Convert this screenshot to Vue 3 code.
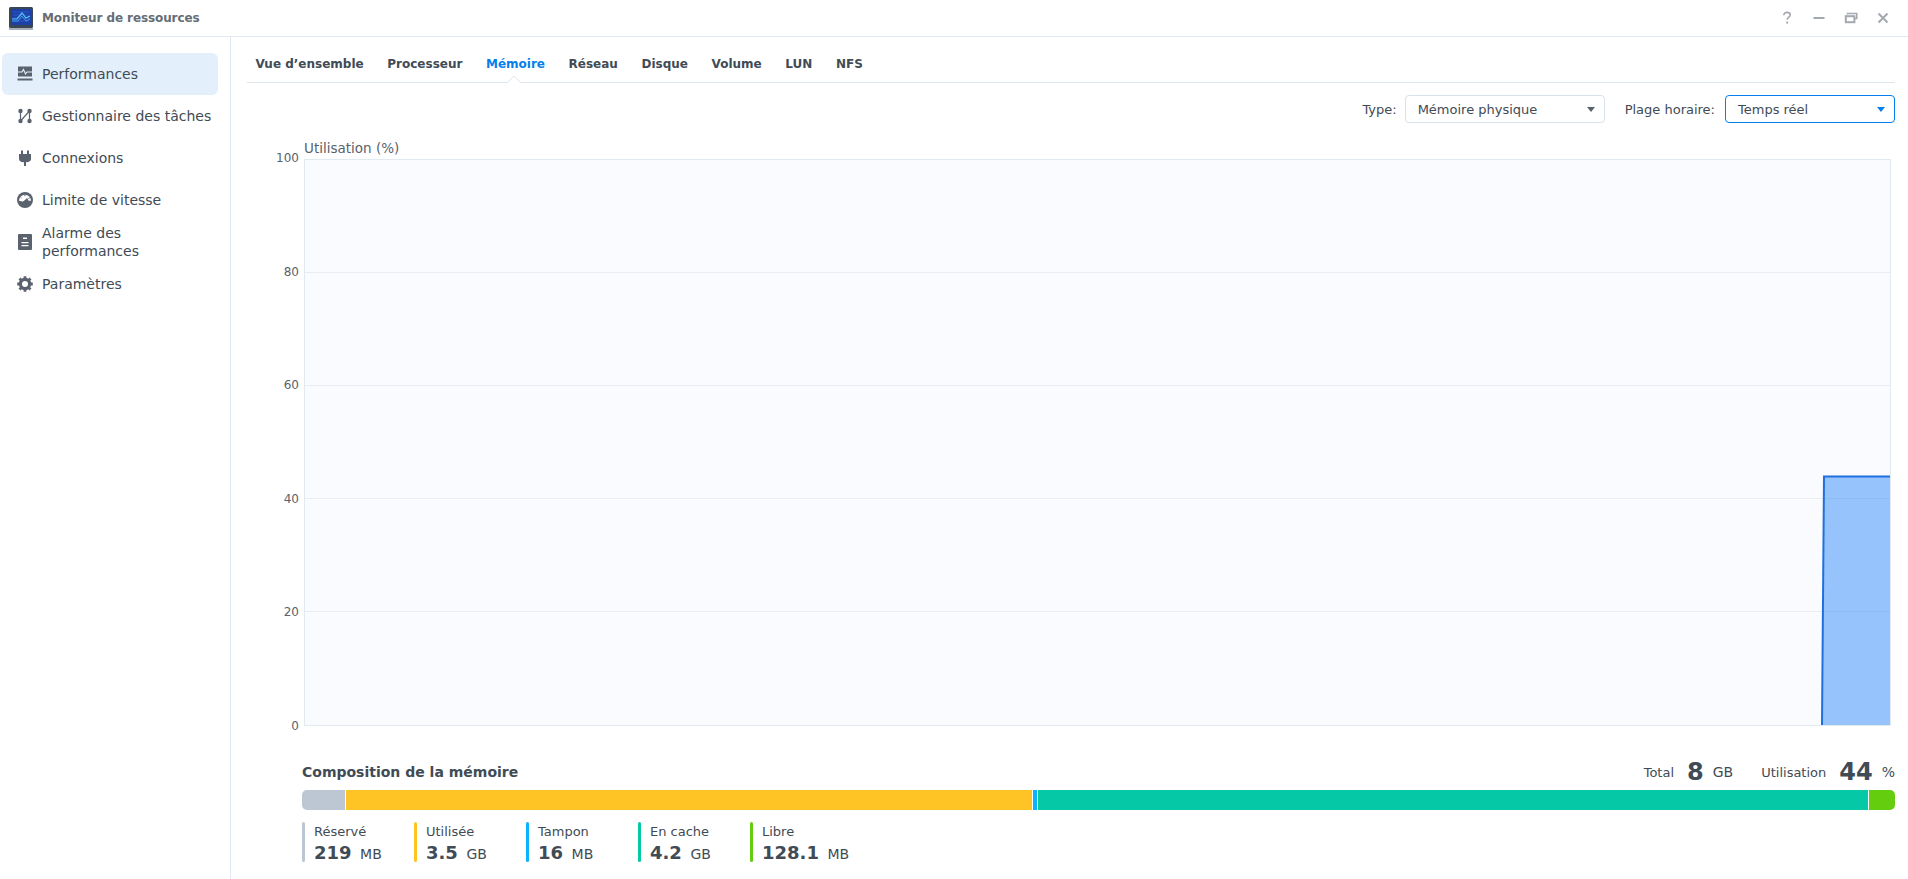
<script setup>
const tabs = ['Vue d’ensemble', 'Processeur', 'Mémoire', 'Réseau', 'Disque', 'Volume', 'LUN', 'NFS']
const ticks = [
  { v: 100, y: 0 }, { v: 80, y: 113.5 }, { v: 60, y: 226.5 },
  { v: 40, y: 339.5 }, { v: 20, y: 452.5 }, { v: 0, y: 566 }
]
const legend = [
  { label: 'Réservé', value: '219', unit: 'MB', color: '#bdc7d3' },
  { label: 'Utilisée', value: '3.5', unit: 'GB', color: '#fec425' },
  { label: 'Tampon', value: '16', unit: 'MB', color: '#0db2fc' },
  { label: 'En cache', value: '4.2', unit: 'GB', color: '#05c9a6' },
  { label: 'Libre', value: '128.1', unit: 'MB', color: '#64cd0e' }
]
</script>

<template>
  <div class="window">
    <header class="titlebar">
      <svg class="logo" width="26" height="24" viewBox="0 0 26 24">
        <rect x="1" y="1" width="24" height="21" rx="1.5" fill="#3a4556" />
        <rect x="3" y="3" width="20" height="16" fill="#1c3fa8" />
        <rect x="1" y="22" width="24" height="2" fill="#a9afb8" />
        <path d="M5 6H21M5 9H21M5 12H21M5 15H21" stroke="#2f58c4" stroke-width="1" />
        <path d="M4 13L9 13L14 7L18 12L22 10" fill="none" stroke="#59c6f2" stroke-width="1.2" />
        <path d="M4 15L10 15L14 10L18 15L22 13" fill="none" stroke="#3c9be6" stroke-width="1" />
      </svg>
      <span class="app-title">Moniteur de ressources</span>
      <div class="win-controls">
        <svg width="14" height="14" viewBox="0 0 14 14"><path d="M3.8 4.2C3.8 2.4 5.2 1.4 7 1.4C8.8 1.4 10.2 2.4 10.2 4C10.2 6.2 7.2 6.2 7.2 8.8" fill="none" stroke="#a4a9b0" stroke-width="1.6" /><rect x="6.2" y="10.6" width="2" height="2" fill="#a4a9b0" /></svg>
        <svg width="14" height="14" viewBox="0 0 14 14"><rect x="1.5" y="6" width="11" height="2" fill="#a4a9b0" /></svg>
        <svg width="14" height="14" viewBox="0 0 14 14"><path d="M3.5 3.5V2.5H12.8V7.5H11" fill="none" stroke="#a4a9b0" stroke-width="1.5" /><rect x="1.8" y="5.2" width="8.6" height="6" fill="none" stroke="#a4a9b0" stroke-width="2" /></svg>
        <svg width="14" height="14" viewBox="0 0 14 14"><path d="M2.5 2.5L11.5 11.5M11.5 2.5L2.5 11.5" stroke="#a4a9b0" stroke-width="2" /></svg>
      </div>
    </header>

    <div class="body">
      <aside class="sidebar">
        <div class="nav-item active">
          <svg class="nav-icon" viewBox="0 0 16 16"><path d="M1 0.5H15V10.5H1Z" fill="#5a626e" /><rect x="0.5" y="12.5" width="15" height="2" fill="#5a626e" /><path d="M1 6H5L6.5 3.5L8.5 8L10 6H15" fill="none" stroke="#e3f0fc" stroke-width="1.1" /></svg>
          <span>Performances</span>
        </div>
        <div class="nav-item">
          <svg class="nav-icon" viewBox="0 0 16 16"><path d="M3.5 3V13M3.5 13L12.5 3M12.5 3V13" fill="none" stroke="#5a626e" stroke-width="1.2" /><circle cx="3.5" cy="3" r="2.2" fill="#5a626e" /><circle cx="12.5" cy="3" r="2.2" fill="#5a626e" /><circle cx="3.5" cy="13" r="2.2" fill="#5a626e" /><circle cx="12.5" cy="13" r="2.2" fill="#5a626e" /></svg>
          <span>Gestionnaire des tâches</span>
        </div>
        <div class="nav-item">
          <svg class="nav-icon" viewBox="0 0 16 16"><path d="M4 0.5H6V4H10V0.5H12V4H14V9C14 11 12.5 12 9 12.2V16H7V12.2C3.5 12 2 11 2 9V4H4Z" fill="#5a626e" /></svg>
          <span>Connexions</span>
        </div>
        <div class="nav-item">
          <svg class="nav-icon" viewBox="0 0 16 16"><circle cx="8" cy="8" r="8" fill="#5a626e" /><path d="M2 8.8A6 6 0 0 1 14 8.8L11.5 8.8L10.5 6.5L8 9.5L5.5 9.5Z" fill="#fff" /><path d="M5.2 10.6L10.6 5.6L8.6 11Z" fill="#5a626e" /><path d="M11.4 6.6L12.8 5.8M8 4.2V2.9M4.5 6L3.6 5.2" stroke="#5a626e" stroke-width="1" /></svg>
          <span>Limite de vitesse</span>
        </div>
        <div class="nav-item">
          <svg class="nav-icon" viewBox="0 0 16 16"><rect x="1" y="0" width="14" height="16" rx="1" fill="#5a626e" /><path d="M6 3.5H10V5H6ZM4.5 8H11.5V9.2H4.5ZM4.5 11H11.5V12.2H4.5Z" fill="#fff" /></svg>
          <span>Alarme des performances</span>
        </div>
        <div class="nav-item">
          <svg class="nav-icon" viewBox="0 0 16 16"><circle cx="8" cy="8" r="4.6" fill="none" stroke="#5a626e" stroke-width="3.2" /><path d="M8 0.2V3M8 13V15.8M0.2 8H3M13 8H15.8M2.5 2.5L4.5 4.5M11.5 11.5L13.5 13.5M13.5 2.5L11.5 4.5M4.5 11.5L2.5 13.5" stroke="#5a626e" stroke-width="2.8" /></svg>
          <span>Paramètres</span>
        </div>
      </aside>

      <main class="content">
        <nav class="tabs">
          <span v-for="t in tabs" :key="t" class="tab" :class="{ current: t === 'Mémoire' }">{{ t }}</span>
          <svg class="tab-caret" width="14" height="7" viewBox="0 0 14 7"><path d="M0 7L7 0L14 7" fill="#fff" stroke="#dde5ee" /></svg>
        </nav>

        <div class="filters">
          <label class="filter-label">Type:</label>
          <div class="select type-select"><span>Mémoire physique</span><i class="arrow"></i></div>
          <label class="filter-label second">Plage horaire:</label>
          <div class="select time-select"><span>Temps réel</span><i class="arrow blue"></i></div>
        </div>

        <div class="chart">
          <div class="axis-title">Utilisation (%)</div>
          <div class="plot-row">
            <div class="y-axis">
              <span v-for="t in ticks" :key="t.v" class="tick">{{ t.v }}</span>
            </div>
            <svg class="plot" width="1587" height="567" viewBox="0 0 1587 567">
              <rect x="0.5" y="0.5" width="1586" height="566" fill="#f9fbfe" stroke="#e2e9f1" />
              <path v-for="t in ticks.slice(1, 5)" :key="t.v" :d="`M1 ${t.y}H1586`" stroke="#e8edf3" stroke-width="1" />
              <path d="M1518 566L1520 317.5H1586V566Z" fill="#1f7ffb" fill-opacity="0.45" />
              <path d="M1518 566L1520 317.5H1586" fill="none" stroke="#1e70e0" stroke-width="2" />
            </svg>
          </div>
        </div>

        <section class="composition">
          <div class="comp-head">
            <h2>Composition de la mémoire</h2>
            <div class="summary">
              <span class="sum-label">Total</span><b class="sum-value">8</b><span class="sum-unit">GB</span>
              <span class="sum-label util">Utilisation</span><b class="sum-value">44</b><span class="sum-unit">%</span>
            </div>
          </div>
          <div class="bar">
            <i class="seg s1"></i><i class="seg s2"></i><i class="seg s3"></i><i class="seg s4"></i><i class="seg s5"></i>
          </div>
          <div class="legend">
            <div v-for="l in legend" :key="l.label" class="legend-item">
              <i class="swatch" :style="{ background: l.color }"></i>
              <div>
                <div class="leg-label">{{ l.label }}</div>
                <div class="leg-value"><b>{{ l.value }}</b><span>{{ l.unit }}</span></div>
              </div>
            </div>
          </div>
        </section>
      </main>
    </div>
  </div>
</template>

<style>
html, body { margin: 0; background: #fff; overflow: hidden; }
</style>

<style scoped>
.window {
  width: 1908px;
  height: 879px;
  display: flex;
  flex-direction: column;
  font-family: "DejaVu Sans", sans-serif;
  font-size: 13px;
  color: #414b55;
  overflow: hidden;
}
.titlebar {
  height: 37px;
  flex: none;
  box-sizing: border-box;
  border-bottom: 1px solid #e3e9f0;
  display: flex;
  align-items: center;
  padding: 0 18px 0 8px;
}
.logo { margin-right: 8px; }
.app-title { font-weight: 700; font-size: 12px; letter-spacing: -0.1px; color: #656d76; }
.win-controls { margin-left: auto; display: flex; gap: 18px; }
.body { flex: 1; display: flex; min-height: 0; }
.sidebar {
  width: 231px;
  flex: none;
  box-sizing: border-box;
  border-right: 1px solid #e3e9f0;
  padding: 16px 12px 0 2px;
}
.nav-item {
  height: 42px;
  display: flex;
  align-items: center;
  padding-left: 15px;
  border-radius: 6px;
  font-size: 14px;
  line-height: 18px;
}
.nav-item.active { background: #e3f0fc; }
.nav-icon { width: 16px; height: 16px; flex: none; margin-right: 9px; }
.content { flex: 1; min-width: 0; padding: 0 13px 0 16px; }
.tabs {
  position: relative;
  height: 46px;
  box-sizing: border-box;
  border-bottom: 1px solid #dde5ee;
  display: flex;
  align-items: center;
  gap: 23.6px;
  padding: 8px 0 0 8.5px;
}
.tab { font-weight: 700; font-size: 12px; color: #414b55; }
.tab.current { color: #057feb; }
.tab-caret { position: absolute; left: 260px; bottom: -1px; }
.filters {
  display: flex;
  align-items: center;
  height: 28px;
  margin-top: 12px;
  justify-content: flex-end;
}
.filter-label { margin-right: 8px; font-size: 13px; }
.filter-label.second { margin-left: 20px; margin-right: 10px; }
.select {
  height: 28px;
  box-sizing: border-box;
  border: 1px solid #d9e1ea;
  border-radius: 4px;
  display: flex;
  align-items: center;
  justify-content: space-between;
  padding: 0 9px 0 12px;
  font-size: 13px;
}
.type-select { width: 200px; }
.time-select { width: 170px; border-color: #057feb; }
.arrow {
  width: 0;
  height: 0;
  border: 4.5px solid transparent;
  border-top: 5px solid #5a626e;
  border-bottom: 0;
}
.arrow.blue { border-top-color: #057feb; }
.chart { margin-top: 18px; margin-left: 57px; }
.axis-title { font-size: 13.5px; line-height: 15px; height: 18px; color: #59626c; }
.plot-row { display: flex; position: relative; }
.y-axis {
  width: 0;
  height: 567px;
  display: flex;
  flex-direction: column;
  justify-content: space-between;
}
.tick {
  display: block;
  width: 24px;
  height: 0;
  line-height: 0;
  margin: -1px 0 0 -29px;
  text-align: right;
  font-size: 12px;
  color: #59626c;
}
.plot { display: block; }
.composition { margin: 31px 0 0 55px; }
.comp-head { display: flex; align-items: center; justify-content: space-between; height: 30px; }
h2 { margin: 0; font-size: 14px; font-weight: 700; color: #414b55; }
.summary { display: flex; align-items: center; font-size: 13px; }
.sum-value { font-size: 24px; margin: 0 9px 0 13px; color: #414b55; }
.sum-unit { font-size: 14px; }
.sum-label.util { margin-left: 28px; }
.bar { height: 20px; display: flex; gap: 1px; border-radius: 5px; overflow: hidden; margin-top: 3px; }
.seg { display: block; height: 100%; }
.s1 { width: 43px; background: #bdc7d3; }
.s2 { width: 686px; background: #fec425; }
.s3 { width: 4px; background: #0db2fc; }
.s4 { width: 830px; background: #05c9a6; }
.s5 { flex: 1; background: #64cd0e; }
.legend { display: flex; margin-top: 12px; }
.legend-item { width: 112px; display: flex; gap: 9px; height: 40px; }
.swatch { width: 3px; height: 40px; border-radius: 2px; flex: none; }
.leg-label { font-size: 13px; line-height: 16px; margin-top: 2px; }
.leg-value { font-size: 14px; line-height: 22px; white-space: nowrap; margin-top: 2px; }
.leg-value b { font-size: 18px; margin-right: 8.5px; }
</style>
